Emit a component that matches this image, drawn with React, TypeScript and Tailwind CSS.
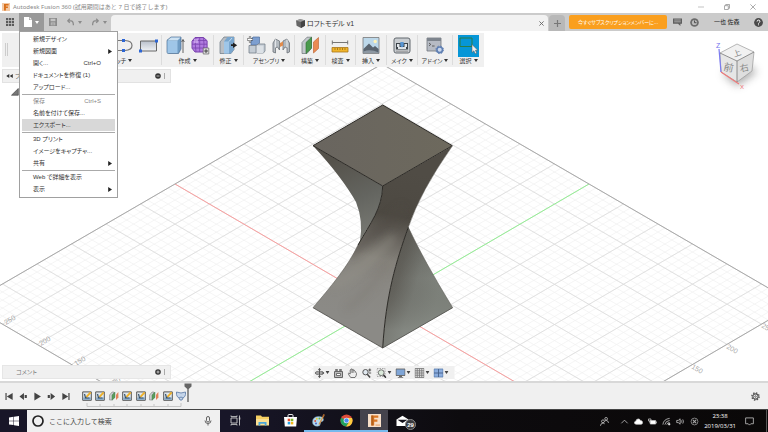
import type { ReactNode } from "react";
import clsx from "clsx";

interface MenuEntry {
  label: string;
  shortcut?: string;
  submenu?: boolean;
  disabled?: boolean;
  active?: boolean;
}

const MENU_GROUPS: MenuEntry[][] = [
  [
    { label: "新規デザイン" },
    { label: "新規図面", submenu: true },
    { label: "開く...", shortcut: "Ctrl+O" },
    { label: "ドキュメントを修復 (1)" },
    { label: "アップロード..." },
  ],
  [
    { label: "保存", shortcut: "Ctrl+S", disabled: true },
    { label: "名前を付けて保存..." },
    { label: "エクスポート...", active: true },
  ],
  [
    { label: "3D プリント" },
    { label: "イメージをキャプチャ..." },
    { label: "共有", submenu: true },
  ],
  [{ label: "Web で詳細を表示" }, { label: "表示", submenu: true }],
];

type FeatureKind = "sketch" | "plane" | "loft";

const FEATURES: FeatureKind[] = [
  "sketch",
  "sketch",
  "plane",
  "sketch",
  "sketch",
  "plane",
  "sketch",
  "loft",
];

export default function App() {
  return (
    <div className="flex h-screen flex-col overflow-hidden bg-white font-['Liberation_Sans','Noto_Sans_CJK_JP',sans-serif] text-[6px] leading-none text-[#333] [font-feature-settings:'palt']">
      <TitleBar />
      <AppBar />
      <main className="relative flex flex-1 flex-col items-start pt-0.5">
        <ModelCanvas />
        <Toolbar />
        <div className="relative mt-0.5 ml-0.5 flex h-[14px] w-[169px] items-center border border-[#e2e2e2] bg-[#f0f0f0] px-[3px]">
          <svg className="h-1.5 w-[7px]" viewBox="0 0 7 6" fill="#333">
            <path d="M3.3 1v4L.2 3zM6.8 1v4L3.7 3z" />
          </svg>
          <span className="flex-1 pl-0.5 text-[#666]">ブ</span>
          <PanelEnd sign="minus" />
        </div>
        <svg className="relative mt-[5px] ml-[11px] size-2" viewBox="0 0 8 8">
          <path d="M.5 7.2 7.3.5v6.7z" fill="#777" stroke="#444" strokeWidth=".7" />
        </svg>
        <div className="relative mt-auto mb-0.5 ml-0.5 flex h-[14px] w-[169px] items-center border border-[#e6e6e6] bg-[#f0f0f0] pr-[3px] pl-[13px]">
          <span className="flex-1 text-[#777]">コメント</span>
          <PanelEnd sign="plus" />
        </div>
        <NavBar />
      </main>
      <Timeline />
      <TaskBar />
    </div>
  );
}

function TitleBar() {
  return (
    <header className="flex h-[13px] items-center gap-[3px] px-0.5 font-['Noto_Sans','Noto_Sans_CJK_JP',sans-serif] text-[#888] [font-feature-settings:normal]">
      <svg className="size-[8px]" viewBox="0 0 8 8">
        <path d="M0 0h8v8H0z" fill="#f3c9a5" />
        <path d="M2 1h4.6v1.6H3.9v1h2v1.5h-2V7.4H2z" fill="#d9701b" />
      </svg>
      <h1 className="flex-1">Autodesk Fusion 360 (試用期間はあと 7 日で終了します)</h1>
      <div className="flex gap-5 pr-[10px]">
        <button aria-label="最小化">
          <svg className="size-1.5" viewBox="0 0 6 6" fill="none" stroke="#aaa" strokeWidth=".7">
            <path d="M0 3h6" />
          </svg>
        </button>
        <button aria-label="元に戻す (縮小)">
          <svg className="size-1.5" viewBox="0 0 6 6" fill="none" stroke="#888" strokeWidth=".7">
            <path d="M.5 1.7h3.8v3.8H.5zM1.7 1.7V.5h3.8v3.8H4.3" />
          </svg>
        </button>
        <button aria-label="閉じる">
          <svg className="size-1.5" viewBox="0 0 6 6" fill="none" stroke="#888" strokeWidth=".7">
            <path d="m.4.4 5.2 5.2M5.6.4.4 5.6" />
          </svg>
        </button>
      </div>
    </header>
  );
}

function AppBar() {
  return (
    <div className="relative z-10 flex h-[18px] bg-[#cbcbcb]">
      <button aria-label="データパネル" className="flex w-[19px] items-center justify-center">
        <svg className="size-2" viewBox="0 0 8 8" fill="#5a5a5a">
          <path d="M0 0h2.2v2.2H0zM2.9 0h2.2v2.2H2.9zM5.8 0H8v2.2H5.8zM0 2.9h2.2v2.2H0zM2.9 2.9h2.2v2.2H2.9zM5.8 2.9H8v2.2H5.8zM0 5.8h2.2V8H0zM2.9 5.8h2.2V8H2.9zM5.8 5.8H8V8H5.8z" />
        </svg>
      </button>
      <div className="relative flex">
        <button
          aria-label="ファイル"
          className="flex w-[25px] items-center justify-center gap-[3px] bg-[#999]"
        >
          <svg className="h-[10px] w-2" viewBox="0 0 8 10">
            <path d="M0 0h5v3h3v7H0z" fill="#fff" />
            <path d="M5.6 0 8 2.4H5.6z" fill="#fff" />
          </svg>
          <Caret className="fill-white" />
        </button>
        <FileMenu />
      </div>
      <div className="flex w-[67px] items-center justify-between pr-1 pl-[5px]">
        <button aria-label="保存">
          <svg className="size-2" viewBox="0 0 8 8">
            <path d="M0 0h8v8H0z" fill="#8b8b8b" />
            <path d="M1.6.8h4.8v2.4H1.6zM1.8 4.6h4.4v2.7H1.8z" fill="#c4c4c4" />
            <path d="M2.4 5.6h3.2M2.4 6.5h3.2" stroke="#8b8b8b" strokeWidth=".5" />
          </svg>
        </button>
        <button aria-label="元に戻す" className="flex items-center gap-1">
          <svg className="h-2 w-[7px]" viewBox="0 0 7 8" fill="none" stroke="#8b8b8b" strokeWidth="1.3">
            <path d="M2.8.8.8 2.9l2 2M1 2.9h3q2.4.2 2.4 4.4" />
          </svg>
          <Caret className="fill-[#8b8b8b]" />
        </button>
        <button aria-label="やり直し" className="flex items-center gap-1">
          <svg className="h-2 w-[7px]" viewBox="0 0 7 8" fill="none" stroke="#8b8b8b" strokeWidth="1.3">
            <path d="m4.2.8 2 2.1-2 2M6 2.9H3Q.6 3.1.6 7.3" />
          </svg>
          <Caret className="fill-[#8b8b8b]" />
        </button>
      </div>
      <div className="mt-0.5 flex flex-1 items-center rounded-t-sm bg-[#f2f2f2] pr-1">
        <div className="flex flex-1 items-center justify-center gap-0.5 text-[7px]">
          <svg className="size-[9px]" viewBox="0 0 9 9">
            <path d="M0 1.5 4 .2l5 1v5.5L5 9 .6 6.8z" fill="#666" />
            <path d="M0 1.5 4.8 3 9 1.2 4 .2z" fill="#999" />
            <path d="M4.8 3 9 1.2v5.5L5 9z" fill="#444" />
          </svg>
          <span>ロフトモデル v1</span>
        </div>
        <button aria-label="タブを閉じる">
          <svg className="size-[5px]" viewBox="0 0 5 5" stroke="#666" strokeWidth=".9">
            <path d="m.4.4 4.2 4.2M4.6.4.4 4.6" />
          </svg>
        </button>
      </div>
      <button
        aria-label="新しいタブ"
        className="mt-0.5 ml-px flex w-4 items-center justify-center rounded-t-sm bg-[#b8b8b8]"
      >
        <svg className="size-[7px]" viewBox="0 0 7 7" stroke="#777" strokeWidth="1.2">
          <path d="M3.5 0v7M0 3.5h7" />
        </svg>
      </button>
      <button className="my-0.5 ml-1 w-[98px] rounded-xs bg-[#fa9f1e] text-[5px] whitespace-nowrap text-white">
        今すぐサブスクリプションメンバーに...
      </button>
      <div className="flex w-[101px] items-center justify-between pr-[5px] pl-1.5">
        <button aria-label="通知">
          <svg className="h-2 w-[9px]" viewBox="0 0 9 8">
            <path d="M0 .4h9v5.4H7.4V8L5 5.8H0z" fill="#5f5f5f" />
            <path d="M1.2 2h6.6M1.2 3.8h6.6" stroke="#b5b5b5" strokeWidth=".8" />
          </svg>
        </button>
        <button aria-label="ジョブの状態">
          <svg className="size-[9px]" viewBox="0 0 9 9">
            <circle cx="4.5" cy="4.5" r="4.3" fill="#6b6b6b" />
            <circle cx="4.5" cy="4.5" r="2.6" fill="#bbb" />
            <path d="M4.5 2.5v2.2h2" fill="none" stroke="#444" strokeWidth=".9" />
          </svg>
        </button>
        <button className="px-1.5 text-[#222]">一也 佐森</button>
        <button aria-label="ヘルプ">
          <svg className="size-[9px]" viewBox="0 0 9 9">
            <circle cx="4.5" cy="4.5" r="4.4" fill="#4a4a4a" />
            <path d="M3.1 3.5q0-1.4 1.4-1.4T5.9 3.4q0 .8-.8 1.2-.6.3-.6 1M4.5 6.4v.9" fill="none" stroke="#fff" strokeWidth="1" />
          </svg>
        </button>
      </div>
    </div>
  );
}

function FileMenu() {
  return (
    <div
      role="menu"
      className="absolute top-full left-0 w-[99px] border border-[#a0a0a0] bg-white px-0.5 pt-px pb-0.5"
    >
      {MENU_GROUPS.map((group, i) => (
        <div key={i} className={clsx(i > 0 && "mt-px border-t border-[#aaa]")}>
          {group.map((entry) => (
            <button
              key={entry.label}
              role="menuitem"
              disabled={entry.disabled}
              className={clsx(
                "flex h-3 w-full items-center pl-[11px] text-left whitespace-nowrap",
                entry.active && "bg-[#d8d8d8]",
                entry.disabled ? "text-[#888]" : "text-[#333]",
                entry.submenu ? "pr-[3px]" : "pr-[14px]",
              )}
            >
              <span className="flex-1">{entry.label}</span>
              {entry.shortcut && <span>{entry.shortcut}</span>}
              {entry.submenu && (
                <svg className="h-[5px] w-1" viewBox="0 0 4 5" fill="#222">
                  <path d="M.2 0 4 2.5.2 5z" />
                </svg>
              )}
            </button>
          ))}
        </div>
      ))}
    </div>
  );
}

function Toolbar() {
  return (
    <div className="relative ml-0.5 flex h-[34px] bg-[#f0f0f0]">
      <div className="mt-[10px] mr-[68px] ml-[3px] h-[13px] w-[3px] border-x border-[#ccc]" />
      <ToolGroup label="スケッチ" className="w-[86px]" alignEnd>
        <ToolIcon>
          <path d="M3 16 15 4" stroke="#666" strokeWidth="1.2" />
        </ToolIcon>
        <ToolIcon>
          <path d="M0 14.5h11q7-.4 7-5t-7-5H0" fill="none" stroke="#777" strokeWidth="1.2" />
          <path d="M8 13h3v3H8zM8 3h3v3H8z" fill="#2d66d4" />
        </ToolIcon>
        <ToolIcon>
          <path d="M1.5 5h16v10h-16z" fill="url(#steel)" stroke="#666" strokeWidth="1" />
          <path d="M16 3.5h3v3h-3zM0 13.5h3v3H0z" fill="#2d66d4" />
        </ToolIcon>
      </ToolGroup>
      <ToolGroup label="作成" className="w-[52px]">
        <ToolIcon>
          <path d="M1 5q0-1.5 1.5-2L5 1h10v12l-2.5 4.5H2.4Q1 17.5 1 16z" fill="#6f9cc4" stroke="#4d6f92" strokeWidth=".7" />
          <path d="M1.5 5h10v12h-10z" fill="#9fc6e8" />
          <path d="M1.5 4.6 5 1.4h9.6L11.5 4.6z" fill="#cfe3f3" />
          <path d="M17 17V4m-1.3 2L17 3.4 18.3 6" fill="none" stroke="#555" strokeWidth=".9" />
        </ToolIcon>
        <ToolIcon>
          <path d="M4 1.5h8.5l3.6 3.2v7.5L12.5 16H4L1 12.2v-7z" fill="#b07be0" stroke="#7942ad" strokeWidth="1" />
          <path d="M2 4.5h13.5M1 8.2h15M1.5 12h14.2M5 1.5Q3.6 8 5 16M8.7 1.5V16M12.5 1.5Q13.7 8 12.3 16" fill="none" stroke="#7942ad" strokeWidth=".8" />
          <path d="M3 3h4v4H3z" fill="#d9b8f4" opacity=".6" />
          <path d="M12.2 12h5.6v6h-5.6z" fill="#ddd" stroke="#666" strokeWidth=".7" />
          <path d="M15 13.2V17M13.2 15H17" stroke="#333" strokeWidth=".9" />
        </ToolIcon>
      </ToolGroup>
      <ToolGroup label="修正" className="w-[30px]">
        <ToolIcon>
          <path d="M1 6 5 1h10v12.5L12 17.5H1z" fill="#b9bec4" stroke="#697582" strokeWidth=".7" />
          <path d="M5 5.5 8.5 1H15v12.5L12 17.5H5z" fill="#79a6ce" />
          <path d="M5 5.5h5v12H5z" fill="#9fc6e8" />
          <path d="M10 5.5 13 2" stroke="#d9ebf8" strokeWidth=".8" />
          <path d="M12 8.3h2V6.5l4.2 2.7-4.2 2.7v-1.8h-2z" fill="#222" />
        </ToolIcon>
      </ToolGroup>
      <ToolGroup label="アセンブリ" className="w-[51px]">
        <ToolIcon>
          <path d="M4 3.5 6 1h6.5v6L11 9H4z" fill="#7d9fd0" stroke="#4e6f9e" strokeWidth=".7" />
          <path d="M2 9.5h7V17H2zM9.5 9.5 11 8h7v7l-1.6 2H9.5z" fill="#c4ccd4" stroke="#77808a" strokeWidth=".8" />
          <path d="M9.5 9.7h6.8V17H9.5z" fill="#dce1e6" />
          <path d="M3 .5v6M0 3.5h6" stroke="#444" strokeWidth="2.2" />
          <path d="M3 1v5M.5 3.5h5" stroke="#fff" strokeWidth="1" />
        </ToolIcon>
        <ToolIcon>
          <path d="M1 16V7l2.4-4 4.1 2v9l-2-3-2 .8V17zM17.5 16V7L15 3l-4 2v9l2-3 2 .8V17z" fill="#b4bac0" stroke="#6c7278" strokeWidth=".8" />
          <path d="M3.4 3.4v8M15 3.4v8" stroke="#eef0f2" strokeWidth=".9" />
          <path d="M8 7 11 5.4v4L8 11z" fill="#e08b4c" />
        </ToolIcon>
      </ToolGroup>
      <ToolGroup label="構築" className="w-[31px]">
        <ToolIcon>
          <path d="M1 6.5 6 1.2h4.5v11L6 17.5H1z" fill="#c3c8cc" stroke="#6d7378" strokeWidth=".7" />
          <path d="M5 6.5 10.5 1.2v11L5 17.5z" fill="#4a9a4c" stroke="#2e6d31" strokeWidth=".6" />
          <path d="M12.5 6 17.5 1.5v11l-5 4.5z" fill="#ea8a52" stroke="#b85f2c" strokeWidth=".6" />
        </ToolIcon>
      </ToolGroup>
      <ToolGroup label="検査" className="w-[30px]">
        <ToolIcon>
          <path d="M1 6.5h16M1.3 4.5v4M16.7 4.5v4" stroke="#777" strokeWidth="1" />
          <path d="M1 11.5h16V16H1z" fill="#f0b52b" stroke="#a8761a" strokeWidth=".8" />
          <path d="M4 12v2M6.5 12v2M9 12v2M11.5 12v2M14 12v2" stroke="#8e6315" strokeWidth=".7" />
        </ToolIcon>
      </ToolGroup>
      <ToolGroup label="挿入" className="w-[31px]">
        <ToolIcon>
          <path d="M1 1.5h16v16H1z" fill="#bcd8ea" stroke="#777" strokeWidth=".8" />
          <circle cx="13.2" cy="5.5" r="1.7" fill="#fff4b8" />
          <path d="M1.4 13 7 7.5l4 4 2-1.5 3.6 3v4.1H1.4z" fill="#59646f" />
          <path d="M1.4 15.5q7-3 15.2 1v.6H1.4z" fill="#8d98a2" />
        </ToolIcon>
      </ToolGroup>
      <ToolGroup label="メイク" className="w-[31px]">
        <ToolIcon>
          <path d="M1 4q0-2 2-2h12q2 0 2 2v11q0 2-2 2H3q-2 0-2-2z" fill="#c9cdd1" stroke="#63696e" strokeWidth="1" />
          <path d="M3 7h12v6.5H3z" fill="#3c4349" />
          <path d="M5 11h8v2H5zM4 8h2.5v3H4zM11.5 8H14v3h-2.5z" fill="#dfe5ea" />
          <path d="M7.3 6h3.4v4L9 11.5 7.3 10z" fill="#5795d3" />
          <path d="M3 15.2h12" stroke="#888" strokeWidth=".8" />
        </ToolIcon>
      </ToolGroup>
      <ToolGroup label="アドイン" className="w-[35px]">
        <ToolIcon>
          <path d="M1 2h14v13H1z" fill="#b6bbc4" stroke="#6e747c" strokeWidth=".8" />
          <path d="M1 2h14v3H1z" fill="#7d848d" />
          <path d="m3 7 1.8 1.4L3 9.8M6 10h2.6" fill="none" stroke="#444" strokeWidth=".8" />
          <circle cx="13.7" cy="13.8" r="2.8" fill="#c9d8ee" stroke="#5f7fb3" strokeWidth="1.6" />
          <circle cx="13.7" cy="13.8" r="3.8" fill="none" stroke="#5f7fb3" strokeWidth="1" strokeDasharray="1.5 1.5" />
        </ToolIcon>
      </ToolGroup>
      <ToolGroup label="選択" className="w-[31px] border-r-0">
        <svg className="h-[22px] w-[21px] shrink-0" viewBox="0 0 21 22">
          <path d="M0 0h21v22H0z" fill="#0696d7" />
          <path d="M2 3h12v8.5H2z" fill="none" stroke="#2a7d45" strokeWidth="1" />
          <path d="M14 9.5v8l1.9-1.7 1.3 3 1.5-.7-1.3-2.8h2.4z" fill="#eee" stroke="#555" strokeWidth=".5" />
        </svg>
      </ToolGroup>
    </div>
  );
}

interface ToolGroupProps {
  label: string;
  className: string;
  alignEnd?: boolean;
  children: ReactNode;
}

function ToolGroup({ label, className, alignEnd, children }: ToolGroupProps) {
  return (
    <div className={clsx("my-0.5 flex flex-col border-r border-[#dcdcdc]", className)}>
      <div
        className={clsx(
          "flex h-[21px] items-center gap-1.5",
          alignEnd ? "justify-end pr-[3px]" : "justify-center",
        )}
      >
        {children}
      </div>
      <button className="flex flex-1 items-center justify-center gap-0.5 whitespace-nowrap">
        {label}
        <Caret className="fill-[#333]" />
      </button>
    </div>
  );
}

function ToolIcon({ children }: { children: ReactNode }) {
  return (
    <svg className="size-[19px] shrink-0" viewBox="0 0 19 19">
      <defs>
        <linearGradient id="steel" x2="0" y2="1">
          <stop stopColor="#b9c0cb" />
          <stop offset="1" stopColor="#f0f2f5" />
        </linearGradient>
      </defs>
      {children}
    </svg>
  );
}

function Caret({ className }: { className: string }) {
  return (
    <svg className={clsx("h-[3px] w-1 shrink-0", className)} viewBox="0 0 4 3">
      <path d="M0 0h4L2 3z" />
    </svg>
  );
}

function PanelEnd({ sign }: { sign: "plus" | "minus" }) {
  return (
    <svg className="mr-0.5 h-2 w-3" viewBox="0 0 12 8">
      <circle cx="5" cy="4" r="2.8" fill="#333" />
      <path d={sign === "plus" ? "M3.5 4h3M5 2.5v3" : "M3.5 4h3"} stroke="#ddd" strokeWidth=".8" />
      <path d="M11.5 1v6" stroke="#aaa" strokeWidth="1" />
    </svg>
  );
}

type Point = [number, number];

// corners of the ground plane: left, back, right, front
const PLANE: Point[] = [
  [-32, 304],
  [382, 64],
  [796, 304],
  [382, 546],
];
const DIVISIONS = 60;

function lerp([ax, ay]: Point, [bx, by]: Point, t: number): Point {
  return [ax + (bx - ax) * t, ay + (by - ay) * t];
}

function gridPath(step: number) {
  const [l, b, r, f] = PLANE;
  let d = "";
  for (let i = 0; i <= DIVISIONS; i += step) {
    const t = i / DIVISIONS;
    const lines = [
      [lerp(l, b, t), lerp(f, r, t)],
      [lerp(b, r, t), lerp(l, f, t)],
    ];
    for (const [p, q] of lines) d += `M${p.join(" ")}L${q.join(" ")}`;
  }
  return d;
}

function ModelCanvas() {
  return (
    <svg
      className="absolute inset-0 size-full"
      viewBox="0 31 768 350"
      preserveAspectRatio="xMidYMid slice"
    >
      <defs>
        <linearGradient id="top" x1="313" y1="146" x2="452" y2="146" gradientUnits="userSpaceOnUse">
          <stop stopColor="#69655f" />
          <stop offset="1" stopColor="#6d695d" />
        </linearGradient>
        <linearGradient id="left" x1="335" y1="160" x2="365" y2="235" gradientUnits="userSpaceOnUse">
          <stop stopColor="#55524b" />
          <stop offset=".55" stopColor="#646560" />
          <stop offset="1" stopColor="#777872" />
        </linearGradient>
        <linearGradient id="ribbon" x1="402" y1="170" x2="372" y2="320" gradientUnits="userSpaceOnUse">
          <stop stopColor="#504c45" />
          <stop offset=".3" stopColor="#4d4942" />
          <stop offset=".43" stopColor="#625e58" />
          <stop offset=".6" stopColor="#85827b" />
          <stop offset=".75" stopColor="#8a8883" />
          <stop offset="1" stopColor="#8b8a86" />
        </linearGradient>
        <linearGradient id="right" x1="388" y1="275" x2="440" y2="290" gradientUnits="userSpaceOnUse">
          <stop stopColor="#605e58" />
          <stop offset=".2" stopColor="#66655f" />
          <stop offset=".55" stopColor="#7c7f79" />
          <stop offset="1" stopColor="#858a83" />
        </linearGradient>
        <linearGradient id="rightShade" x1="0" y1="227" x2="0" y2="330" gradientUnits="userSpaceOnUse">
          <stop stopColor="#4c4a44" stopOpacity=".4" />
          <stop offset=".5" stopColor="#4c4a44" stopOpacity=".1" />
          <stop offset="1" stopColor="#8a8e88" stopOpacity=".5" />
        </linearGradient>
        <filter id="soft" x="-50%" y="-50%" width="200%" height="200%">
          <feGaussianBlur stdDeviation="4" />
        </filter>
        <clipPath id="ribbonClip">
          <path d="M382.7 186 452.3 146Q420 192 408.3 227.3C396 262 386 294 382.7 348L313 307.7C333 284 348 266 358 245C371 222 382 209 382.7 186z" />
        </clipPath>
      </defs>

      <path d={gridPath(1)} fill="none" stroke="#f1f1f1" strokeWidth=".7" />
      <path d={gridPath(5)} fill="none" stroke="#dcdcdc" strokeWidth=".8" />
      <path d="M175 184 589 425" stroke="#fa9f9f" strokeWidth="1" />
      <path d="M589 184 175 425" stroke="#94f094" strokeWidth="1" />
      <path d="M-32 304 382 64 796 304 382 546z" fill="none" stroke="#a9a9a9" strokeWidth="1" />
      <g fill="#a8a8a8" fontSize="7">
        <text transform="translate(6 325) rotate(-30)">250</text>
        <text transform="translate(41 346) rotate(-30)">200</text>
        <text transform="translate(76 366) rotate(-30)">150</text>
        <text transform="translate(111 387) rotate(-30)">100</text>
        <text transform="translate(691 368) rotate(30)">150</text>
        <text transform="translate(726 348) rotate(30)">200</text>
        <text transform="translate(761 327) rotate(30)">250</text>
      </g>

      <path d="M313 145.7 382.7 186C382 209 371 222 360 241Q363.5 221 356 202Q342 177 313 145.7z" fill="url(#left)" />
      <g clipPath="url(#ribbonClip)">
        <path d="M300 130h160v230H300z" fill="url(#ribbon)" />
        <path d="M404 208Q378 230 350 254" fill="none" stroke="#4f4b44" strokeWidth="8" opacity=".55" filter="url(#soft)" />
        <path d="M332 286Q362 272 394 236" fill="none" stroke="#98968b" strokeWidth="6" opacity=".5" filter="url(#soft)" />
        <path d="M346 310Q372 290 388 262" fill="none" stroke="#78736d" strokeWidth="5" opacity=".35" filter="url(#soft)" />
      </g>
      <path d="M408.3 227.3Q423 259 452.7 307.7L382.7 348C386 294 396 262 408.3 227.3z" fill="url(#right)" />
      <path d="M408.3 227.3Q423 259 452.7 307.7L382.7 348C386 294 396 262 408.3 227.3z" fill="url(#rightShade)" />
      <path d="M382.7 105 452.3 145.7 382.7 186 313 145.7z" fill="url(#top)" />
      <g fill="none" stroke="#2c2a26" strokeWidth="1">
        <path d="M382.7 105 452.3 145.7 382.7 186 313 145.7z" />
        <path d="M382.7 186C382 209 371 222 358 245" />
        <path d="M408.3 227.3C396 262 386 294 382.7 348" />
      </g>
      <path d="M313 307.7 382.7 348 452.7 307.7" fill="none" stroke="#4b4a46" strokeWidth=".8" />
      <path d="M313 307.7C333 284 348 266 358 245M452.3 146Q420 192 408.3 227.3Q423 259 452.7 307.7" fill="none" stroke="#55534d" strokeWidth=".5" />

      <ViewCube />
    </svg>
  );
}

function ViewCube() {
  return (
    <g>
      <path d="M722 73 737 86 757 72 750 66z" fill="#888" opacity=".7" filter="url(#soft)" />
      <path d="M737 44 754 52 737 61 720 53z" fill="#f1f1f1" />
      <path d="M720 53 737 61V82L721 72z" fill="#e6e6e6" />
      <path d="M737 61 754 52 752 71 737 82z" fill="#dedede" />
      <path d="M737 44 754 52 752 71 737 82 721 72 720 53z" fill="none" stroke="#999" strokeWidth=".7" />
      <path d="M720 53 737 61 754 52M737 61v21" fill="none" stroke="#777" strokeWidth=".8" />
      <path d="M719 49 721 72" stroke="#7a7af0" strokeWidth="1.2" />
      <path d="M721 72 739 84" stroke="#f07a7a" strokeWidth="1.2" />
      <g fill="#888" textAnchor="middle">
        <text fontSize="8" transform="translate(738 56) rotate(-20)">上</text>
        <text fontSize="10" transform="translate(728 71) rotate(12)">前</text>
        <text fontSize="9" transform="translate(745 71) rotate(-12)">右</text>
      </g>
      <text x="716" y="48" fontSize="7" fill="#7272ee">Z</text>
      <text x="740" y="89" fontSize="6" fill="#f07272">X</text>
    </g>
  );
}

function NavBar() {
  return (
    <div className="absolute bottom-0.5 left-1/2 flex h-[13px] w-[141px] -translate-x-1/2 items-center justify-between bg-[#f0f0f0] pr-[6px] pl-px">
      <NavButton label="オービット" caret>
        <path d="M5 .5v9M.5 5h9" stroke="#555" strokeWidth="1" />
        <path d="M5 0 3.4 2h3.2zM5 10 3.4 8h3.2zM10 5 8 3.4v3.2z" fill="#555" />
        <ellipse cx="5" cy="5" rx="4.3" ry="1.8" fill="none" stroke="#666" strokeWidth=".8" />
      </NavButton>
      <NavButton label="ビュー正面">
        <path d="M1 3.5h8v6H1z" fill="#bbb" stroke="#666" strokeWidth="1" />
        <path d="M2 1.5h2v1H2zM6 1.5h2v1H6zM3 5.5h4v2H3z" fill="#fff" stroke="#555" strokeWidth=".8" />
      </NavButton>
      <NavButton label="画面移動">
        <path d="M3.2 9.5 1 6.4q-.8-1.1.2-1.2L2.7 6V2q.5-1 1 0V1.2q.6-1 1.2 0v.6q.7-1 1.3 0v1q.8-.8 1.3.2L9 5.5Q9 8 7.5 9.5z" fill="#eee" stroke="#555" strokeWidth=".8" />
        <path d="M3.8 2v3M5 2v3M6.3 2.5V5" stroke="#666" strokeWidth=".6" />
      </NavButton>
      <NavButton label="ズーム">
        <circle cx="4" cy="4.2" r="2.7" fill="#dfe7ee" stroke="#555" strokeWidth="1" />
        <path d="m5.8 6.2 2.8 3.3" stroke="#444" strokeWidth="1.5" />
        <path d="M8.3.5v3M6.8 2h3M7.5 5h2.3" stroke="#333" strokeWidth=".8" />
      </NavButton>
      <NavButton label="フィット" caret>
        <path d="M.5.5h8v8h-8z" fill="none" stroke="#888" strokeWidth=".7" strokeDasharray="1.5 1" />
        <circle cx="4.7" cy="4.7" r="2.9" fill="#dcebdc" stroke="#666" strokeWidth=".9" />
        <path d="m7 7 2.5 2.7" stroke="#333" strokeWidth="1.6" />
      </NavButton>
      <NavButton label="表示設定" caret>
        <path d="M.5 1h9v6.5h-9z" fill="#7fa5d6" stroke="#666" strokeWidth=".9" />
        <path d="M3.5 7.5h3V9h1.2v.8H2.3V9h1.2z" fill="#666" />
      </NavButton>
      <NavButton label="グリッドとスナップ" caret>
        <path d="M.5.5h9v9h-9z" fill="#ddd" />
        <path d="M.5.5h9v9h-9zM.5 2.75h9M.5 5h9M.5 7.25h9M2.75.5v9M5 .5v9M7.25.5v9" fill="none" stroke="#777" strokeWidth=".8" />
      </NavButton>
      <NavButton label="ビューポート" caret>
        <path d="M.5 1h9v8h-9z" fill="#8badde" stroke="#5c7fae" strokeWidth=".8" />
        <path d="M5 1v8M.5 5h9" stroke="#46618a" strokeWidth=".9" />
      </NavButton>
    </div>
  );
}

interface NavButtonProps {
  label: string;
  caret?: boolean;
  children: ReactNode;
}

function NavButton({ label, caret, children }: NavButtonProps) {
  return (
    <button aria-label={label} className="flex items-center gap-px">
      <svg className="size-[10px]" viewBox="0 0 10 10">
        {children}
      </svg>
      {caret && <Caret className="fill-[#444]" />}
    </button>
  );
}

const PLAYBACK = [
  { label: "先頭へ", d: "M.5 1h1.3v8H.5zM8.5 1v8L2 5z" },
  { label: "前へ", d: "M5.5 1.2v7.6L.5 5zM6.3 3.2h2.4v3.6H6.3z" },
  { label: "再生", d: "M1.5.5 8.8 5 1.5 9.5z" },
  { label: "次へ", d: "M4 1.2v7.6L9 5zM.8 3.2h2.4v3.6H.8z" },
  { label: "末尾へ", d: "M8.2 1h1.3v8H8.2zM1.5 1v8L8 5z" },
];

function Timeline() {
  return (
    <div className="flex h-7 shrink-0 items-center border-t-2 border-[#d8d8d8] bg-[#f0f0f0] pr-2 pl-[5px]">
      <div className="flex gap-[5px]">
        {PLAYBACK.map((item) => (
          <button key={item.label} aria-label={item.label}>
            <svg className="size-[9px]" viewBox="0 0 10 10" fill="#444">
              <path d={item.d} />
            </svg>
          </button>
        ))}
      </div>
      <div className="relative ml-3 flex w-[104px] justify-between">
        {FEATURES.map((kind, i) => (
          <button key={i} aria-label={`フィーチャ ${i + 1}`}>
            <FeatureIcon kind={kind} />
          </button>
        ))}
        <svg className="absolute top-3 left-0 h-1 w-full" viewBox="0 0 104 4" fill="none" stroke="#c6c6c6">
          <path d="M5 0v3.5h94V0M18 1v2M32 1v2M45 1v2M59 1v2M72 1v2M86 1v2" />
        </svg>
        <svg className="absolute -top-2 left-full h-[19px] w-2 -translate-x-1/4" viewBox="0 0 8 19">
          <path d="M.5.5h7v3L4.7 6v13H3.3V6L.5 3.5z" fill="#666" />
        </svg>
      </div>
      <button aria-label="設定" className="ml-auto">
        <svg className="size-[9px]" viewBox="0 0 10 10" fill="none" stroke="#555">
          <circle cx="5" cy="5" r="4" strokeWidth="1.6" strokeDasharray="1.57 1.57" />
          <circle cx="5" cy="5" r="2.9" strokeWidth="1.2" />
          <circle cx="5" cy="5" r=".9" strokeWidth=".9" />
        </svg>
      </button>
    </div>
  );
}

function FeatureIcon({ kind }: { kind: FeatureKind }) {
  return (
    <svg className="size-[10px]" viewBox="0 0 10 10">
      {kind === "sketch" && (
        <>
          <path d="M.7.9h8.6v8.4H.7z" fill="#e2e9ef" stroke="#555" strokeWidth="1" />
          <path d="M1.2 6.5h7.6v2.3H1.2z" fill="#84a6c4" />
          <path d="m2.5 3 1 4h4" fill="none" stroke="#38546e" strokeWidth="1.2" />
          <path d="M4.5 5.8 8.7 1.3" stroke="#eeb027" strokeWidth="1.9" />
          <path d="m3.6 6.7 1.2-.4-.8-.8z" fill="#333" />
        </>
      )}
      {kind === "plane" && (
        <>
          <path d="M.5 4 3 1h2v5.5L3 9H.5z" fill="#c9ccce" stroke="#777" strokeWidth=".5" />
          <path d="M3 4 6 1v5.5L3 9.3z" fill="#5a9c5c" stroke="#41734a" strokeWidth=".4" />
          <path d="M7 3.8 9.4 1v5.5L7 9z" fill="#e2825b" />
        </>
      )}
      {kind === "loft" && (
        <path d="M.5 1Q5 3 9.5 1v2.5Q9.5 5.5 7 7L6 9H4L3 7Q.5 5.5.5 3.5zM3 7q2-2 4 0" fill="#c5d5ea" stroke="#6482ab" strokeWidth=".9" />
      )}
    </svg>
  );
}

function TaskBar() {
  return (
    <footer className="flex h-[23px] shrink-0 border-t border-[#444] bg-linear-to-r from-[#181628] from-30% via-[#0d0b0e] via-60% to-[#0a0808] text-white">
      <button aria-label="スタート" className="flex w-[27px] items-center justify-center">
        <svg className="size-[10px]" viewBox="0 0 10 10" fill="#fff">
          <path d="m0 1.5 4.5-.7v3.9H0zM5 .7 10 0v4.7H5zM0 5.2h4.5v3.9L0 8.5zM5 5.2h5V10l-5-.8z" />
        </svg>
      </button>
      <label className="flex w-[193px] items-center gap-[5px] bg-[#f0f0f0] pr-2 pl-[5px]">
        <svg className="size-3 shrink-0" viewBox="0 0 12 12">
          <circle cx="6" cy="6" r="5" fill="none" stroke="#222" strokeWidth="1.7" />
        </svg>
        <input
          aria-label="検索"
          placeholder="ここに入力して検索"
          className="min-w-0 flex-1 text-[7px] outline-none [font-feature-settings:normal] placeholder:text-[#444]"
        />
        <svg className="h-[10px] w-2 shrink-0" viewBox="0 0 8 10" fill="none" stroke="#555" strokeWidth=".9">
          <rect x="2.5" y=".5" width="3" height="5.5" rx="1.5" />
          <path d="M1 4.5Q1 7.5 4 7.5T7 4.5M4 7.5V9.5" />
        </svg>
      </label>
      <div className="flex">
        <TaskButton label="タスクビュー">
          <path d="M3 4h6v5H3zM3 1.5V2.6h6V1.5M3 11.5v-1.1h6v1.1M11.5 1.5v10" fill="none" stroke="#ccc" strokeWidth=".9" />
          <path d="M10.8 3.5h1.5v2h-1.5z" fill="#ccc" />
        </TaskButton>
        <TaskButton label="エクスプローラー">
          <path d="M0 1.5h5l1 1.3h7V11H0z" fill="#f5cf62" />
          <path d="M0 5h13v6.5H0z" fill="#fbe093" />
          <path d="M2.5 8h8v3.5H8.7V9.8H4.3v1.7H2.5z" fill="#4aa5d9" />
        </TaskButton>
        <TaskButton label="ストア">
          <path d="M4 3V1.5q0-1 1-1h3q1 0 1 1V3" fill="none" stroke="#fff" strokeWidth=".9" />
          <path d="M0 3h13l-.8 9.5H.8z" fill="#fff" />
          <path d="M3.7 4.7h2.5v2.5H3.7z" fill="#e8502d" />
          <path d="M6.8 4.7h2.5v2.5H6.8z" fill="#7cb728" />
          <path d="M3.7 7.9h2.5v2.5H3.7z" fill="#28a4e8" />
          <path d="M6.8 7.9h2.5v2.5H6.8z" fill="#f6b717" />
        </TaskButton>
        <TaskButton label="ペイント" running>
          <path d="M.5 8Q.5 3 6 2.5q5-.3 5.5 3 .2 2-2.2 2.3-1.3.3-1 2 0 2.5-3 2.5Q.5 12 .5 8z" fill="#b5d8ee" stroke="#6a93ac" strokeWidth=".5" />
          <circle cx="3.2" cy="7" r="1" fill="#d9533c" />
          <circle cx="4.8" cy="4.8" r="1" fill="#f0c838" />
          <circle cx="7.5" cy="4.5" r="1" fill="#5caf48" />
          <circle cx="4" cy="9.5" r="1" fill="#4a5fc0" />
          <path d="m7 10.5 4.7-9" stroke="#d99247" strokeWidth="1.3" />
          <path d="m11.2 2.3 1-2" stroke="#a8642c" strokeWidth="1.7" />
        </TaskButton>
        <TaskButton label="Chrome" running>
          <circle cx="6.5" cy="6.5" r="6" fill="#dd4b39" />
          <path d="M1.2 3.7A6 6 0 0 0 6.2 12.5L9 8 6.5 6.5z" fill="#1fa15d" />
          <path d="M6.2 12.5A6 6 0 0 0 12 4H6.5L9.2 8z" fill="#fccd3f" />
          <circle cx="6.5" cy="6.5" r="2.8" fill="#fff" />
          <circle cx="6.5" cy="6.5" r="2.2" fill="#4a8bf0" />
        </TaskButton>
        <TaskButton label="Fusion 360" running active>
          <path d="M0 0h13v13H0z" fill="#f8dfc9" />
          <path d="M3.3 1.5h7v2.3H6.2v1.7h3.2v2.2H6.2v3.8H3.3z" fill="#db7724" />
          <path d="M3.3 1.5h2v10h-2z" fill="#b5611c" />
          <path d="M7.5 10.5H12v1.2H7.5z" fill="#e9a770" />
        </TaskButton>
        <button aria-label="メール" className="relative flex w-7 items-center justify-center">
          <svg className="size-[13px]" viewBox="0 0 13 13">
            <path d="M.5 4.5 6.5.8l6 3.7V11H.5z" fill="#fff" />
            <path d="M1.5 4.8h10L6.5 8z" fill="#15131c" />
          </svg>
          <span className="absolute right-0 bottom-0.5 flex size-[11px] items-center justify-center rounded-full border border-[#888] bg-[#3a3a3e] font-bold">
            29
          </span>
        </button>
      </div>
      <div className="ml-auto flex items-center gap-[5px] pr-3">
        <TrayIcon label="People">
          <circle cx="3.3" cy="4.8" r="1.6" />
          <path d="M.5 9.8q.3-3 2.8-3 1.2 0 1.9.8" />
          <circle cx="6.8" cy="2" r="1.5" />
          <path d="M5.2 4.8Q6 3.9 7 3.9q2.2 0 2.5 2.7" />
        </TrayIcon>
        <span className="w-px" />
        <TrayIcon label="隠れているインジケーター">
          <path d="M1.5 7 5 3.5 8.5 7" />
        </TrayIcon>
        <TrayIcon label="OneDrive">
          <path d="M2.5 8Q.5 8 .5 6.4t1.6-1.7Q2.5 2.2 4.8 2.2q1.7 0 2.2 1.6 2.5.2 2.5 2.2Q9.5 8 8 8z" fill="#fff" />
        </TrayIcon>
        <TrayIcon label="バッテリー">
          <path d="M2.5 4h6v3.8h-6z" fill="#fff" />
          <path d="M9.5 5v2M.5 2.2h2.8v2.2H.5zM2 4.4v2" />
        </TrayIcon>
        <TrayIcon label="Wi-Fi">
          <path d="M1 8.5Q1.5 2.5 8.5 1.5M3.2 8.5q.5-4 5.3-4.7M5.3 8.5Q5.7 6.3 8.5 6" />
          <path d="M7.3 7.3h1.5v1.5H7.3z" fill="#fff" />
        </TrayIcon>
        <TrayIcon label="音量">
          <path d="M.8 3.8h1.7L4.6 2v6L2.5 6.2H.8zM6 3.8q.8 1.2 0 2.4M7.5 2.7q1.6 2.3 0 4.6" />
        </TrayIcon>
        <TrayIcon label="IME">
          <circle cx="5" cy="5" r="3.8" stroke="#aaa" />
          <path d="m3.2 3.2 3.6 3.6M6.8 3.2 3.2 6.8" stroke="#aaa" strokeWidth="1.2" />
        </TrayIcon>
        <time className="mr-1 text-center font-['Open_Sans',sans-serif] leading-[10px]">
          23:38
          <br />
          2019/03/31
        </time>
        <TrayIcon label="通知">
          <path d="M.7 1h8.6v6.5H6.4L5 9 3.6 7.5H.7z" />
        </TrayIcon>
      </div>
      <div className="mr-px border-l border-[#555]" />
    </footer>
  );
}

interface TaskButtonProps {
  label: string;
  running?: boolean;
  active?: boolean;
  children: ReactNode;
}

function TaskButton({ label, running, active, children }: TaskButtonProps) {
  return (
    <button
      aria-label={label}
      className={clsx(
        "flex w-7 items-center justify-center border-b-2",
        running ? "border-[#76b9ed]" : "border-transparent",
        active && "bg-[#45434d]",
      )}
    >
      <svg className="size-[13px]" viewBox="0 0 13 13">
        {children}
      </svg>
    </button>
  );
}

function TrayIcon({ label, children }: { label: string; children: ReactNode }) {
  return (
    <button aria-label={label}>
      <svg className="size-[9px]" viewBox="0 0 10 10" fill="none" stroke="#d8d8d8" strokeWidth=".8">
        {children}
      </svg>
    </button>
  );
}
